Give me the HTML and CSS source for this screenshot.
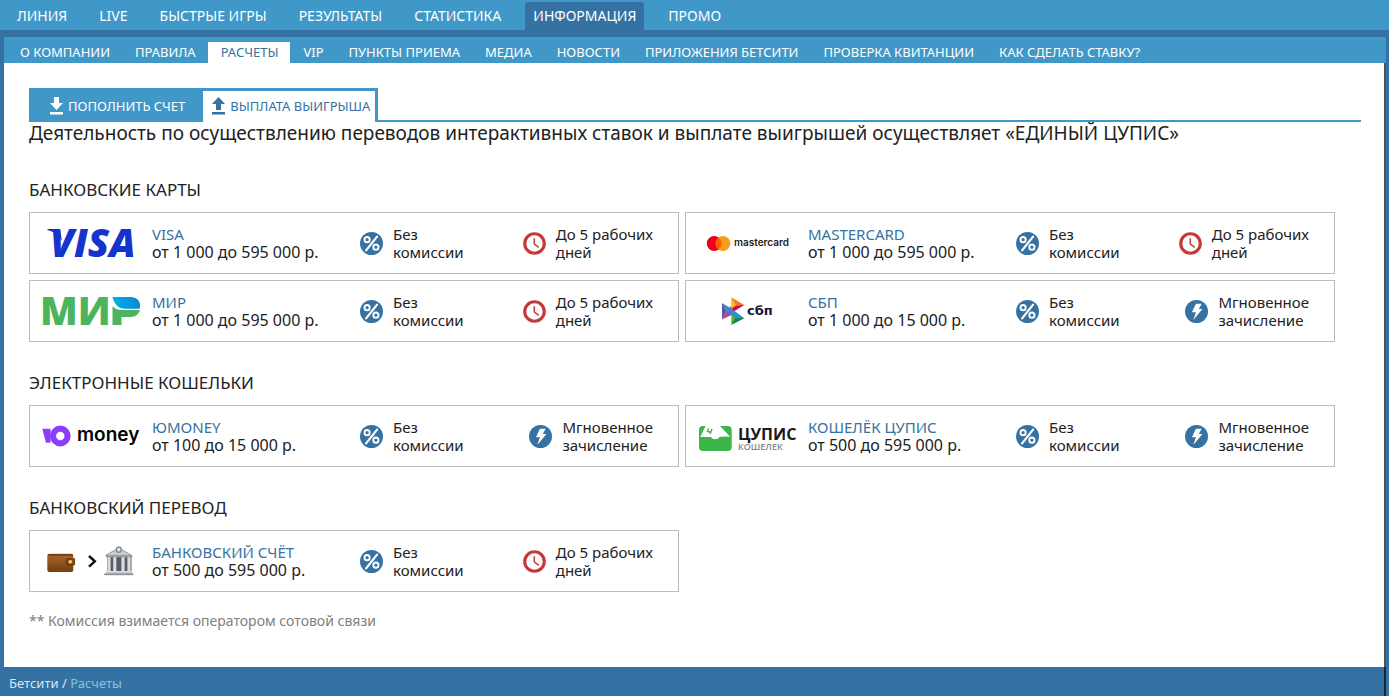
FILE: index.html
```html
<!DOCTYPE html>
<html lang="ru">
<head>
<meta charset="utf-8">
<title>Расчеты — Бетсити</title>
<link rel="stylesheet" href="styles.css">
</head>
<body>
<svg class="defs" width="0" height="0" aria-hidden="true">
  <defs>
    <linearGradient id="mir-blue" x1="0" x2="1"><stop offset="0" stop-color="#00b2ee"/><stop offset="1" stop-color="#0a86cf"/></linearGradient>
    <linearGradient id="leather" x1="0" y1="0" x2="0" y2="1"><stop offset="0" stop-color="#a9682f"/><stop offset="1" stop-color="#743b0e"/></linearGradient>
  </defs>
  <symbol id="percent" viewBox="0 0 24 24">
    <circle cx="12" cy="12" r="12" fill="#3572a3"/>
    <g fill="none" stroke="#fff" stroke-width="2"><circle cx="7.4" cy="8" r="2.700"/><circle cx="16.600" cy="15.800" r="2.700"/><path d="M17.800 4.800 6.400 19.200" stroke-width="2.300" stroke-linecap="round"/></g>
  </symbol>
  <symbol id="clock" viewBox="0 0 24 24">
    <circle cx="12" cy="12" r="10.200" fill="#fff" stroke="#c43a3a" stroke-width="3.300"/>
    <path d="M11.800 6.500v6l4.600 3.600" fill="none" stroke="#c43a3a" stroke-width="1.600"/>
  </symbol>
  <symbol id="bolt" viewBox="0 0 24 24">
    <circle cx="12" cy="12" r="12" fill="#3572a3"/>
    <path d="M11.400 4h6l-3 5.400h3.800L8.600 20.800l2.800-8H7.200z" fill="#fff"/>
  </symbol>
</svg>

<nav class="topnav" aria-label="Основное меню">
  <a href="#">ЛИНИЯ</a>
  <a href="#">LIVE</a>
  <a href="#">БЫСТРЫЕ ИГРЫ</a>
  <a href="#">РЕЗУЛЬТАТЫ</a>
  <a href="#">СТАТИСТИКА</a>
  <a href="#" class="active">ИНФОРМАЦИЯ</a>
  <a href="#">ПРОМО</a>
</nav>

<div class="page">
  <nav class="subnav" aria-label="Информация">
    <a href="#">О КОМПАНИИ</a>
    <a href="#">ПРАВИЛА</a>
    <a href="#" class="active">РАСЧЕТЫ</a>
    <a href="#">VIP</a>
    <a href="#">ПУНКТЫ ПРИЕМА</a>
    <a href="#">МЕДИА</a>
    <a href="#">НОВОСТИ</a>
    <a href="#">ПРИЛОЖЕНИЯ БЕТСИТИ</a>
    <a href="#">ПРОВЕРКА КВИТАНЦИИ</a>
    <a href="#">КАК СДЕЛАТЬ СТАВКУ?</a>
  </nav>

  <main class="content">
    <div class="tabs">
      <a href="#" class="tab"><svg class="tab-icon" viewBox="0 0 13 18"><path d="M4 0h5v6h4l-6.500 7L0 6h4zM0 15h13v2.500H0z" fill="currentColor"/></svg>ПОПОЛНИТЬ СЧЕТ</a>
      <a href="#" class="tab tab-active"><svg class="tab-icon" viewBox="0 0 13 18"><path d="M4 13h5V7h4L6.500 0 0 7h4zM0 15h13v2.500H0z" fill="currentColor"/></svg>ВЫПЛАТА ВЫИГРЫША</a>
    </div>
    <p class="lead">Деятельность по осуществлению переводов интерактивных ставок и выплате выигрышей осуществляет «ЕДИНЫЙ ЦУПИС»</p>

    <section>
      <h2>БАНКОВСКИЕ КАРТЫ</h2>
      <div class="cards">
        <article class="card">
          <svg class="logo" viewBox="0 0 122 60">
            <text x="20" y="44" class="visa">VISA</text>
            <path d="M17.500 16H30l2 12c-3.500-6-8.500-9.500-14.500-11z" fill="#1434cb"/>
          </svg>
          <div class="info"><a href="#">VISA</a><span>от 1 000 до 595 000 р.</span></div>
          <div class="term"><svg class="ico"><use href="#percent"/></svg><span>Без<br>комиссии</span></div>
          <div class="term"><svg class="ico"><use href="#clock"/></svg><span>До 5 рабочих<br>дней</span></div>
        </article>
        <article class="card">
          <svg class="logo" viewBox="0 0 122 60">
            <circle cx="28.200" cy="30.500" r="7.400" fill="#eb001b"/><circle cx="37" cy="30.500" r="7.400" fill="#f79e1b"/>
            <path d="M32.600 24.500a7.400 7.400 0 0 1 0 12 7.400 7.400 0 0 1 0-12z" fill="#ff5f00"/>
            <text x="48" y="33" class="mc">mastercard</text>
          </svg>
          <div class="info"><a href="#">MASTERCARD</a><span>от 1 000 до 595 000 р.</span></div>
          <div class="term"><svg class="ico"><use href="#percent"/></svg><span>Без<br>комиссии</span></div>
          <div class="term"><svg class="ico"><use href="#clock"/></svg><span>До 5 рабочих<br>дней</span></div>
        </article>
        <article class="card">
          <svg class="logo" viewBox="0 0 122 60">
            <text x="10" y="44" class="mir">МИ</text>
            <path d="M82.500 25c2.300 2.600 5.300 4 9 4H110c-1.200 4.200-4.600 7-9 7h-9.500v8h-9z" fill="#4db45e"/>
            <path d="M82.500 16H101c5.500 0 9 4 9 8.500 0 1.200-.1 2.200-.4 3.200H95c-6.500 0-11-4.500-12.500-11.700z" fill="url(#mir-blue)"/>
          </svg>
          <div class="info"><a href="#">МИР</a><span>от 1 000 до 595 000 р.</span></div>
          <div class="term"><svg class="ico"><use href="#percent"/></svg><span>Без<br>комиссии</span></div>
          <div class="term"><svg class="ico"><use href="#clock"/></svg><span>До 5 рабочих<br>дней</span></div>
        </article>
        <article class="card">
          <svg class="logo" viewBox="0 0 122 60">
            <path d="M36 22l4.800 8L36 38.500z" fill="#5b57a2"/>
            <path d="M45.300 24.500v9.400L36 38.500l4.800-8.300z" fill="#a8479b"/>
            <path d="M45.300 16.300l4.600 8-.1 4.200-4.500 2.500z" fill="#fab718"/>
            <path d="M45.300 16.300L58.300 24l-8.400.6z" fill="#ee7e22"/>
            <path d="M58.300 24l-13 8v-4l4.600-3.400z" fill="#d90751"/>
            <path d="M45.300 31.500l4.600 3v2.800l-4.600 6.700z" fill="#63b22f"/>
            <path d="M45.300 44l4.600-8 8.400 1.300z" fill="#0d8a42"/>
            <path d="M36 22l9.300 5.600 13 9.700h-8.400L40.800 30z" fill="#2c8fd0"/>
            <text x="61" y="34" class="sbp">сбп</text>
          </svg>
          <div class="info"><a href="#">СБП</a><span>от 1 000 до 15 000 р.</span></div>
          <div class="term"><svg class="ico"><use href="#percent"/></svg><span>Без<br>комиссии</span></div>
          <div class="term"><svg class="ico"><use href="#bolt"/></svg><span>Мгновенное<br>зачисление</span></div>
        </article>
      </div>
    </section>

    <section>
      <h2>ЭЛЕКТРОННЫЕ КОШЕЛЬКИ</h2>
      <div class="cards">
        <article class="card">
          <svg class="logo" viewBox="0 0 122 60">
            <path d="M12.300 22.700h8.200v14h-4.600z" fill="#8b3ffd"/>
            <circle cx="30.300" cy="30" r="7.300" fill="none" stroke="#8b3ffd" stroke-width="6.200"/>
            <text x="47" y="35" class="money">money</text>
          </svg>
          <div class="info"><a href="#">ЮMONEY</a><span>от 100 до 15 000 р.</span></div>
          <div class="term"><svg class="ico"><use href="#percent"/></svg><span>Без<br>комиссии</span></div>
          <div class="term"><svg class="ico"><use href="#bolt"/></svg><span>Мгновенное<br>зачисление</span></div>
        </article>
        <article class="card">
          <svg class="logo" viewBox="0 0 122 60">
            <rect x="13" y="20" width="32.700" height="25" rx="4" fill="#3db54a"/>
            <path d="M14.300 31L19.500 20H34l10 10.500-10.500.3c-1 1.800-2.300 2.400-4.300 2.400S25.800 32.600 25 31z" fill="#fff"/>
            <path d="M22.500 22.500l-1 3 3.200.8m1.300-3.300l-2 5" fill="none" stroke="#3db54a" stroke-width="1.400"/>
            <text x="52" y="34" class="cupis">ЦУПИС</text>
            <text x="52" y="44" class="cupis-sub">КОШЕЛЕК</text>
          </svg>
          <div class="info"><a href="#">КОШЕЛЁК ЦУПИС</a><span>от 500 до 595 000 р.</span></div>
          <div class="term"><svg class="ico"><use href="#percent"/></svg><span>Без<br>комиссии</span></div>
          <div class="term"><svg class="ico"><use href="#bolt"/></svg><span>Мгновенное<br>зачисление</span></div>
        </article>
      </div>
    </section>

    <section>
      <h2>БАНКОВСКИЙ ПЕРЕВОД</h2>
      <div class="cards">
        <article class="card">
          <svg class="logo" viewBox="0 0 122 60">
            <rect x="17.300" y="22.800" width="26" height="18.200" rx="2" fill="url(#leather)"/>
            <path d="M18 24h24.500" stroke="#5d2c08" stroke-width="1.200"/>
            <path d="M18.500 39.500h23.500" stroke="#8f5322" stroke-width=".8" stroke-dasharray="1.500 1"/>
            <path d="M39 27.800h5.500v6H39a3 3 0 0 1 0-6z" fill="#8a4d1b" stroke="#4e2406" stroke-width=".8"/>
            <circle cx="40.300" cy="30.800" r="1.700" fill="#ffd34a"/>
            <path d="M59 25l5.800 5.300L59 35.600" fill="none" stroke="#111" stroke-width="2.500"/>
            <path d="M75.500 24.500L85 19h7.500l9.500 5.500z" fill="#c9cccf" stroke="#85898c" stroke-width=".8"/>
            <circle cx="88.800" cy="18.700" r="2.500" fill="#e3e5e6" stroke="#777b7e" stroke-width="1.200"/>
            <path d="M77 26h24.500v14H77z" fill="#555d66"/>
            <path d="M79 26v14M84.800 26v14M93 26v14M99 26v14" stroke="#dadcde" stroke-width="3.200"/>
            <path d="M76 25.500h26.500" stroke="#9b9fa2" stroke-width="1.600"/>
            <path d="M76 40.500h26.500v1.800H76z" fill="#c3c6c8"/><path d="M74.300 42.300h29v1.900h-29z" fill="#8f9396"/>
          </svg>
          <div class="info"><a href="#">БАНКОВСКИЙ СЧЁТ</a><span>от 500 до 595 000 р.</span></div>
          <div class="term"><svg class="ico"><use href="#percent"/></svg><span>Без<br>комиссии</span></div>
          <div class="term"><svg class="ico"><use href="#clock"/></svg><span>До 5 рабочих<br>дней</span></div>
        </article>
      </div>
    </section>
    <p class="note">** Комиссия взимается оператором сотовой связи</p>
  </main>

  <footer class="crumbs"><a href="#">Бетсити</a> / <span>Расчеты</span></footer>
</div>
</body>
</html>
```

FILE: styles.css
```css
* { box-sizing: border-box; }

body {
  margin: 0;
  min-height: 100vh;
  display: flex;
  flex-direction: column;
  background: #3572a3;
  color: #222;
  font-family: "Noto Sans", "Open Sans", sans-serif;
}

a { color: inherit; text-decoration: none; }
.defs { position: absolute; }

.topnav {
  display: flex;
  gap: 16px;
  padding: 2px 9px 0;
  background: #4098c8;
  color: #fff;
  font-size: 14px;
  line-height: 28px;
}
.topnav a { padding: 0 8px; border-radius: 3px 3px 0 0; white-space: nowrap; }
.topnav .active { background: #3572a3; }

.page {
  flex: 1;
  display: flex;
  flex-direction: column;
  margin: 7px 3px 0 4px;
}

.subnav {
  display: flex;
  padding: 5px 3px 0;
  background: #4098c8;
  color: #fff;
  font-size: 13px;
  line-height: 21px;
}
.subnav a { padding: 0 12px 0 13px; white-space: nowrap; }
.subnav .active { background: #fff; color: #3572a3; }

.content {
  padding: 25px 23px 35px 25px;
  background: #fff;
  border-right: 2px solid #505357;
}

.tabs { display: flex; border-bottom: 2px solid #4098c8; }
.tab {
  display: flex;
  align-items: center;
  gap: 5px;
  height: 34px;
  margin-bottom: -2px;
  padding: 1px 18px 0 21px;
  background: #4098c8;
  color: #fff;
  font-size: 13px;
}
.tab-active {
  padding: 0 5px 2px 9px;
  background: #fff;
  color: #3572a3;
  border: solid #4098c8;
  border-width: 3px 3px 0 0;
}
.tab-icon { width: 13px; height: 18px; }

.lead { margin: 0; font-size: 19px; line-height: 22px; }

h2 { margin: 30px 0 11px; font-size: 17px; font-weight: 400; line-height: 22px; }
.lead + section h2 { margin-top: 35px; }

.cards {
  display: grid;
  grid-template-columns: 1fr 1fr;
  gap: 6px;
  margin-right: 26px;
}
.card {
  display: grid;
  grid-template-columns: 122px minmax(0, 208px) 1fr auto;
  align-items: center;
  padding-right: 25px;
  border: 1px solid #bbb;
}
.logo { display: block; width: 122px; height: 60px; }
.info { display: flex; flex-direction: column; line-height: 18px; font-size: 16px; }
.info a { color: #3572a3; font-size: 15px; }
.term { display: flex; align-items: center; gap: 10px; font-size: 15px; line-height: 18px; }
.ico { width: 23px; height: 23px; }

.visa { font: italic 800 39px "Open Sans", sans-serif; fill: #1434cb; }
.mir { font: 800 39px "Open Sans", sans-serif; fill: #4db45e; }
.mc { font: 600 10px Inter, sans-serif; fill: #231f20; }
.sbp { font: 700 13px "DejaVu Sans", sans-serif; fill: #1d1346; }
.money { font: 600 19px Inter, sans-serif; fill: #000; }
.cupis { font: 700 16px "Open Sans", sans-serif; fill: #1a1a1a; }
.cupis-sub { font: 600 9px "Open Sans", sans-serif; fill: #888; }

.note { margin: 18px 0 0; color: #808080; font-size: 14px; line-height: 22px; }

.crumbs {
  flex: 1;
  padding: 5px;
  border-right: 2px solid #10263a;
  color: #d5e6f2;
  font-size: 13px;
  line-height: 22px;
}
.crumbs span { color: #8cc0dc; }
```
